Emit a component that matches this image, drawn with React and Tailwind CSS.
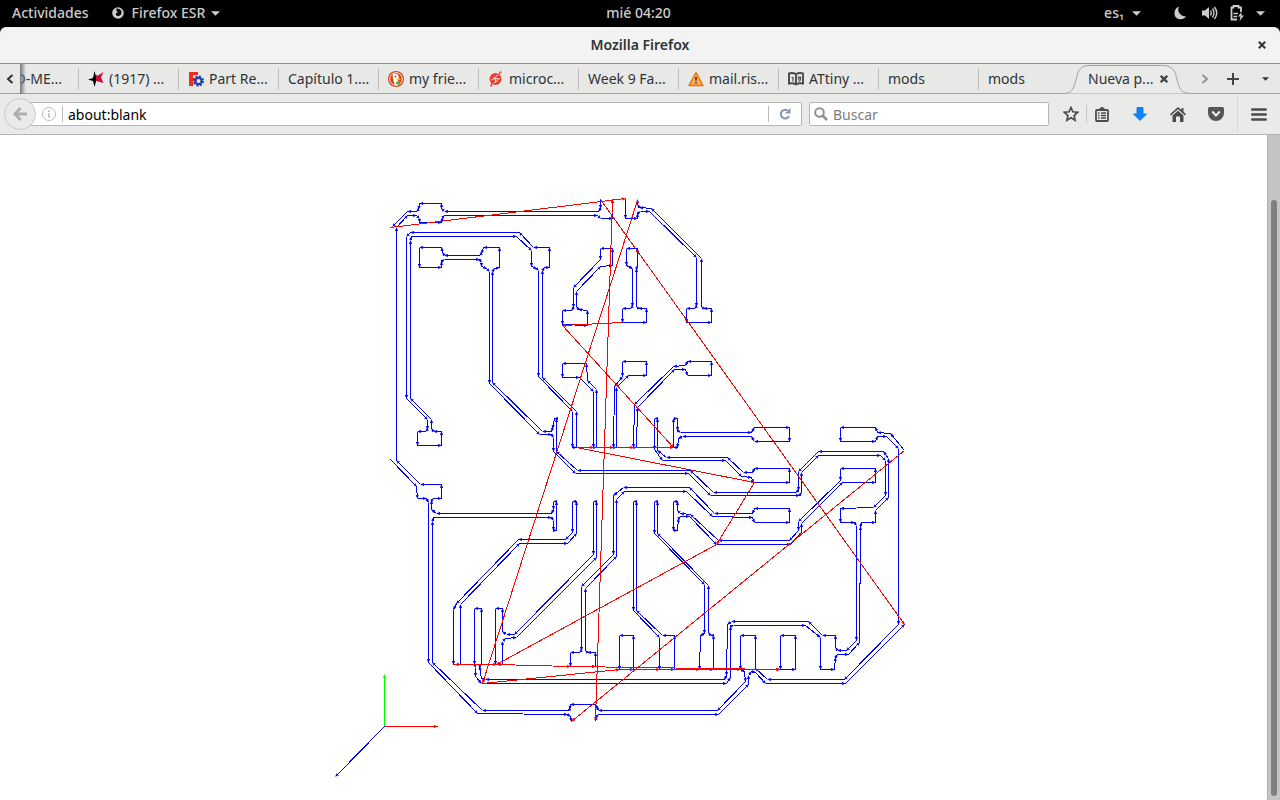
const tabs = [
  { title: '(1917) ...', icon: 'star' },
  { title: 'Part Re...', icon: 'freecad' },
  { title: 'Capítulo 1....' },
  { title: 'my frie...', icon: 'duck' },
  { title: 'microc...', icon: 'micro' },
  { title: 'Week 9 Fa...' },
  { title: 'mail.ris...', icon: 'warning' },
  { title: 'ATtiny ...', icon: 'book' },
  { title: 'mods' },
  { title: 'mods' },
];

// Each toolpath is a list of x,y points; every move ends in an arrow head.
const cuts = [
  '601,199 601,208 599,211 445,211 442,208 442,203 420,203 419,209 417,211 408,211 393,226',
  '397,459 397,227 408,215 417,215 420,218 420,222 442,222 443,217 445,215 598,215 601,218 613,218 613,199',
  '626,198 626,218 638,218 638,213 641,211 650,211 697,257 697,306 695,308 687,308 687,322 712,322 712,308 704,308 702,306 702,258 652,208 640,207 638,204 638,199',
  '550,247 534,247 520,232 411,232 407,236 407,398 428,419 428,429 426,431 418,431 418,445 442,445 442,431 434,431 432,428 432,419 411,398 411,240 412,236 517,236 532,250 532,266 537,268 539,270 539,376 573,411 573,447 577,447 577,411 543,377 543,270 545,267 550,267 550,247',
  '442,247 420,247 420,267 442,267 442,261 445,259 480,259 482,262 482,266 487,268 490,271 490,383 540,434 552,434 554,437 554,451 576,473 689,473 711,495 800,495 802,492 802,472 819,455 881,455 886,460 886,495 874,507 841,508 841,522 855,522 857,525 857,640 847,650 838,650 836,647 836,635 823,635 809,621 732,621 728,624 727,675 725,679 486,679 482,678 480,666 482,664 482,608 475,608 475,664 476,667 476,676 482,683 727,683 731,677 731,626 734,625 806,625 821,637 821,669 835,669 836,657 838,654 849,654 860,642 861,526 862,522 876,522 876,510 889,497 889,458 884,451 819,451 799,471 799,490 796,492 714,492 691,470 578,470 557,451 557,418 555,418 553,428 552,431 543,431 493,382 493,271 495,268 500,267 500,247 484,247 482,253 480,255 445,255 443,252 442,247',
  '613,248 601,248 601,259 574,287 574,307 572,310 563,310 563,324 588,325 588,310 579,309 577,306 577,291 601,266 613,265 613,248',
  '638,248 627,248 627,265 633,268 633,306 631,308 623,308 623,322 647,322 647,308 639,308 637,306 637,268 638,265 638,248',
  '587,363 563,363 563,377 580,377 594,391 594,447 597,447 597,389 588,380 587,363',
  '647,361 623,361 623,376 620,380 615,386 614,447 617,447 617,387 629,375 647,375 647,361',
  '712,361 688,361 686,365 674,366 635,404 634,447 637,447 638,407 675,369 686,369 688,375 712,375 712,361',
  '658,418 655,418 655,449 663,460 726,460 742,476 752,477 754,482 790,482 790,468 755,468 753,472 744,472 728,457 667,457 658,450 658,418',
  '674,447 674,418 678,418 678,430 681,432 752,432 755,427 790,427 790,441 755,441 752,436 683,436 679,438 678,447 674,447',
  '905,450 891,433 878,432 876,427 841,427 841,441 876,441 878,436 887,436 899,448 899,624 845,679 768,679 756,668 756,635 741,635 741,669 745,671 746,681 718,710 599,710 597,706 596,704 571,704 570,709 568,710 483,710 433,662 433,521 434,517 552,517 554,520 554,530 557,530 557,501 554,501 554,509 552,513 437,513 432,509 432,500 434,498 442,498 442,484 421,484 397,460',
  '391,459 417,486 418,498 427,498 429,502 429,662 478,713 568,714 571,716 572,721',
  '596,721 597,716 599,714 719,714 749,684 749,675 752,671 756,672 766,683 846,683 905,624',
  '876,468 841,468 841,480 799,521 799,530 790,540 719,540 691,514 681,513 678,510 678,501 674,501 674,530 678,530 679,518 681,516 690,516 717,544 791,544 802,532 802,523 843,482 876,482 876,468',
  '790,508 755,508 753,513 715,513 690,487 624,487 614,495 614,554 582,586 582,650 580,652 571,652 571,666 596,666 596,652 588,652 586,650 586,588 617,556 617,499 625,491 687,491 713,516 753,517 755,522 790,522 790,508',
  '577,501 573,501 573,532 566,539 519,539 457,603 454,609 454,664 461,664 461,604 520,543 568,543 577,533 577,501',
  '597,501 594,501 594,554 515,634 507,634 503,631 503,608 496,608 496,664 503,664 503,641 506,638 517,637 597,557 597,501',
  '637,501 634,501 634,610 660,637 660,669 675,669 675,635 663,635 637,610 637,501',
  '658,501 655,501 655,533 705,584 705,633 701,635 700,669 714,669 714,635 711,635 709,632 709,585 658,533 658,501',
  '634,635 620,635 620,669 634,669 634,635',
  '796,635 781,635 781,669 796,669 796,635',
];

const jogs = [
  '391,227 626,198',
  '613,199 596,720',
  '638,200 483,683 620,669 660,669 700,669 741,669 781,669',
  '905,450 572,721',
  '601,199 905,624',
  '623,322 563,325 674,447',
  '577,447 594,447 614,447 634,447 674,447',
  '577,447 755,482 717,544 497,664',
  '454,664 497,664 571,666 780,669',
];

function Path({ points, color }) {
  const pts = points.split(' ').map((p) => p.split(',').map(Number));
  return pts.slice(1).map(([x, y], i) => (
    <line
      key={i}
      x1={pts[i][0]}
      y1={pts[i][1]}
      x2={x}
      y2={y}
      stroke={color}
      shapeRendering="crispEdges"
      markerEnd={`url(#head-${color})`}
    />
  ));
}

function Toolpath() {
  return (
    <svg viewBox="0 135 1267 665" className="block h-full w-full" role="img" aria-label="Toolpath">
      <defs>
        {['blue', 'red', 'lime'].map((color) => (
          <marker
            key={color}
            id={`head-${color}`}
            markerUnits="userSpaceOnUse"
            markerWidth="5"
            markerHeight="4"
            refX="3.500"
            refY="2"
            orient="auto"
          >
            <path d="M0 .4 4 2 0 3.6z" fill={color} />
          </marker>
        ))}
      </defs>
      <g transform="translate(-.5 .5)" fill="none" strokeWidth="1">
        {cuts.map((points, i) => <Path key={i} points={points} color="blue" />)}
        {jogs.map((points, i) => <Path key={i} points={points} color="red" />)}
        <Path points="385,726 385,674" color="lime" />
        <Path points="385,726 438,726" color="red" />
        <Path points="385,726 336,776" color="blue" />
      </g>
    </svg>
  );
}

function TabIcon({ name }) {
  if (name === 'star') {
    return (
      <svg viewBox="0 0 16 16" className="h-4 w-4 shrink-0">
        <path d="M8 4 10 4.500 15.500 1 13 6.500 15.500 12 10 10.500 8 10z" fill="#c8103c" />
        <path d="M6.500 0 8 5.500v5L6.500 16 5 10 0 8.500 5 7z" fill="#000" />
      </svg>
    );
  }
  if (name === 'freecad') {
    return (
      <svg viewBox="0 0 16 16" className="h-4 w-4 shrink-0">
        <path d="M1 1h9v3H5v3h4v3H5v5H1z" fill="#f32b1d" />
        <circle cx="10.500" cy="10" r="3.200" fill="none" stroke="#1f45a8" strokeWidth="2.400" />
        <circle cx="10.500" cy="10" r="4.800" fill="none" stroke="#1f45a8" strokeWidth="1.600" strokeDasharray="2 1.770" />
      </svg>
    );
  }
  if (name === 'duck') {
    return (
      <svg viewBox="0 0 16 16" className="h-4 w-4 shrink-0">
        <circle cx="8" cy="8" r="8" fill="#d9400d" />
        <circle cx="8" cy="8" r="6.300" fill="#d9400d" stroke="#fff" strokeWidth="1" />
        <path d="M5 3c3-1 5 0 6 3l-1 3 1 5H7C6 11 4 6 5 3z" fill="#fff" />
        <path d="m8 7 5 1-4 2z" fill="#fc3" />
        <path d="m8 11 4-1v4l-4-1z" fill="#4ca64c" />
        <circle cx="7.500" cy="5.500" r=".8" fill="#234" />
      </svg>
    );
  }
  if (name === 'micro') {
    return (
      <svg viewBox="0 0 16 16" className="h-4 w-4 shrink-0">
        <circle cx="7.500" cy="8" r="6" fill="#e8412f" />
        <path d="m11 3 2-2.500M4 13l-1.500 2.500" stroke="#e8412f" strokeWidth="1.500" />
        <path d="m3.500 9 3-2 3.500-3.500M6.500 7l4 1-2.500 3-1.500-4M8 11l-2 1m5-4 1-1" fill="none" stroke="#fff" strokeWidth=".9" />
      </svg>
    );
  }
  if (name === 'warning') {
    return (
      <svg viewBox="0 0 16 16" className="h-4 w-4 shrink-0">
        <path d="M8 1.500 15 14.500H1z" fill="#fbac5c" stroke="#e8750a" strokeWidth="1.500" strokeLinejoin="round" />
        <path d="M7 6h2l-.4 4H7.400zM7.200 11h1.600v1.600H7.200z" fill="#5a3310" />
      </svg>
    );
  }
  return (
    <svg viewBox="0 0 16 16" className="h-4 w-4 shrink-0" fill="none" stroke="#4a4a4a">
      <path d="M1 2.500c3-1 5-.5 7 .8 2-1.300 4-1.800 7-.8v10c-3-.6-5-.3-7 1-2-1.300-4-1.600-7-1zM8 3v10" strokeWidth="1.900" />
      <path d="M3.500 6.500h1.500v4M10.500 6h2v2h-2zm2 2c0 2-1 2-2 2.500" strokeWidth="1.200" />
    </svg>
  );
}

function Caret({ className }) {
  return (
    <svg viewBox="0 0 10 5" className={className} fill="currentColor">
      <path d="M0 0h10L5 5z" />
    </svg>
  );
}

function TopBar() {
  return (
    <header className="grid h-[27px] shrink-0 grid-cols-3 items-center bg-black pr-[15px] pb-px pl-3 text-sm font-medium text-[#cccccc]">
      <div className="flex items-center">
        <button>Actividades</button>
        <button className="ml-[23px] flex items-center">
          <svg viewBox="0 0 12 12" className="mr-2 h-3 w-3">
            <circle cx="6" cy="6" r="5.800" fill="#ccc" />
            <path d="M4.500 1.500c2.500 0 5 1 5 4 0 2-1.500 3.500-3.500 3.500S3.500 7.500 4 6l2-.5L4.500 4z" fill="#000" />
          </svg>
          Firefox ESR
          <Caret className="ml-[6px] h-[5px] w-[9px]" />
        </button>
      </div>
      <button className="justify-self-center">mié 04:20</button>
      <div className="flex items-center justify-end">
        <button className="flex items-center">
          es₁
          <Caret className="ml-2 h-[5px] w-[9px]" />
        </button>
        <button className="ml-8 flex items-center gap-4" aria-label="Sistema">
          <svg viewBox="0 0 14 14" className="h-[14px] w-[14px]" fill="currentColor">
            <path d="M6 .5C4 4 6 10 13 10.500 10 15 2 14 1.500 8 1.300 4 3 1.500 6 .5z" />
          </svg>
          <svg viewBox="0 0 16 14" className="-ml-px h-[14px] w-4" fill="none" stroke="currentColor">
            <path d="M0 4.500h3L7 1v12L3 9.500H0z" fill="currentColor" stroke="none" />
            <path d="M8.500 4.500q1.500 2.500 0 5M10.500 2.500q3 4.500 0 9M12.500 1q4.500 6 0 12" strokeWidth="1.400" />
          </svg>
          <svg viewBox="0 0 14 16" className="-ml-1 h-4 w-[14px]" fill="none" stroke="currentColor">
            <path d="M7 14.500H1.500v-12h2V1h5v1.500h2.500V7" strokeWidth="1.800" />
            <path d="M3.500 8.500H8M3.500 11.500H7" strokeWidth="1.600" />
            <path d="M11.500 7 8 11.500h2.500L9.500 16l4.500-5.500h-2.500z" fill="currentColor" stroke="none" />
          </svg>
          <Caret className="-ml-1 h-[5px] w-[9px]" />
        </button>
      </div>
    </header>
  );
}

function TabStrip() {
  return (
    <div className="flex h-[31px] shrink-0 border-t border-[#8b8e88] bg-[#e8e8e7] text-sm text-[#2e3436] shadow-[inset_0_-1px_0_#a3a5a0]">
      <button className="flex w-5 shrink-0 items-center justify-center" aria-label="Pestañas anteriores">
        <svg viewBox="0 0 8 10" className="h-[10px] w-2" fill="none" stroke="currentColor" strokeWidth="2">
          <path d="M6.500 1 2 5l4.500 4" />
        </svg>
      </button>
      <div className="relative flex w-[58px] shrink-0 items-center justify-end overflow-hidden pr-4">
        <button className="whitespace-nowrap">D-ME...</button>
        <span className="absolute inset-y-0 left-0 w-[6px] bg-gradient-to-r from-[#777] to-transparent" />
      </div>
      {tabs.map((tab, i) => (
        <button
          key={i}
          className="flex min-w-0 max-w-[100px] flex-1 items-center gap-[5px] overflow-hidden whitespace-nowrap bg-[linear-gradient(#bfc0bd,#bfc0bd)] bg-[length:1px_22px] bg-[position:left_center] bg-no-repeat pl-[10px]"
        >
          {tab.icon && <TabIcon name={tab.icon} />}
          {tab.title}
        </button>
      ))}
      <div className="relative -ml-[14px] flex w-[126px] shrink-0 items-center pl-6">
        <svg viewBox="0 0 126 30" className="absolute inset-0 h-[30px] w-[126px]">
          <path
            d="M0 29.500c7 0 9-4 11-10l2-8C15 4 19 1.500 25 1.500h74c7 0 11 3 13 10l2 8c2 6 4 10 12 10"
            fill="#eaeae9"
            stroke="#a0a29e"
          />
        </svg>
        <button className="relative">Nueva p...</button>
        <button className="relative ml-[7px]" aria-label="Cerrar pestaña">
          <svg viewBox="0 0 8 8" className="h-2 w-2" stroke="#41474a" strokeWidth="2.300">
            <path d="m.8.8 6.400 6.400m0-6.400L.8 7.200" />
          </svg>
        </button>
      </div>
      <div className="ml-auto flex w-[89px] shrink-0 items-center pl-[10px]">
        <button aria-label="Pestañas siguientes">
          <svg viewBox="0 0 8 10" className="h-[10px] w-2" fill="none" stroke="#929592" strokeWidth="2">
            <path d="m1.500 1 4.500 4-4.500 4" />
          </svg>
        </button>
        <button className="ml-[18px]" aria-label="Nueva pestaña">
          <svg viewBox="0 0 12 12" className="h-3 w-3" stroke="#41474a" strokeWidth="2">
            <path d="M6 0v12M0 6h12" />
          </svg>
        </button>
        <button className="ml-[23px]" aria-label="Listar todas las pestañas">
          <Caret className="h-1 w-[7px]" />
        </button>
      </div>
    </div>
  );
}

function NavBar() {
  return (
    <div className="flex h-[41px] shrink-0 items-center border-b border-[#b4b6b2] bg-[#eaeae9] pr-[13px] text-sm">
      <button
        className="relative z-10 ml-1 flex h-8 w-8 shrink-0 items-center justify-center rounded-full border border-[#c9cac7] bg-[#eaeae9]"
        aria-label="Atrás"
      >
        <svg viewBox="0 0 14 14" className="h-[14px] w-[14px]" fill="none" stroke="#aeafac" strokeWidth="3">
          <path d="M7.500 1 2 7l5.500 6M2 7h12" />
        </svg>
      </button>
      <div className="-ml-2 flex h-6 min-w-0 flex-1 items-center rounded-[2px] border border-[#b6b8b3] bg-white pl-[13px]">
        <svg viewBox="0 0 14 14" className="h-[14px] w-[14px] shrink-0" fill="none" stroke="#bcbcbc">
          <circle cx="7" cy="7" r="6.500" />
          <path d="M7 6v5M7 3v2" strokeWidth="1.600" />
        </svg>
        <span className="ml-[6px] h-4 w-px bg-[#b9b9b9]" />
        <input
          type="text"
          defaultValue="about:blank"
          aria-label="Dirección"
          className="h-full min-w-0 flex-1 bg-transparent pl-[5px] text-black outline-none"
        />
        <span className="h-4 w-px bg-[#b9b9b9]" />
        <button className="flex w-8 justify-center" aria-label="Recargar">
          <svg viewBox="0 0 12 12" className="h-3 w-3" fill="none" stroke="#8795a5" strokeWidth="2">
            <path d="M8.500 2.500A4.300 4.300 0 1 0 10 8" />
            <path d="M11.500 0v5.500H6z" fill="#8795a5" stroke="none" />
          </svg>
        </button>
      </div>
      <label className="ml-[7px] flex h-6 w-[240px] shrink-0 items-center rounded-[2px] border border-[#b6b8b3] bg-white pl-1">
        <svg viewBox="0 0 14 14" className="h-[14px] w-[14px] shrink-0" fill="none" stroke="#909090" strokeWidth="2">
          <circle cx="5.500" cy="5.500" r="4.300" />
          <path d="m8.500 8.500 4.500 4.500" strokeWidth="2.500" />
        </svg>
        <input
          type="text"
          placeholder="Buscar"
          aria-label="Buscar"
          className="h-full min-w-0 flex-1 bg-transparent pl-[5px] outline-none placeholder:text-[#7d7d7d]"
        />
      </label>
      <button className="ml-[14px]" aria-label="Marcador">
        <svg viewBox="0 0 16 16" className="h-4 w-4" fill="none" stroke="#4c4c4c" strokeWidth="1.700">
          <path d="m8 1.500 1.900 4.300 4.700.5-3.500 3.200 1 4.700L8 11.800l-4.100 2.400 1-4.700L1.400 6.300l4.700-.5z" />
        </svg>
      </button>
      <span className="ml-[7px] h-[18px] w-px bg-[#c5c5c3]" />
      <button className="ml-2" aria-label="Lista de marcadores">
        <svg viewBox="0 0 14 15" className="h-[15px] w-[14px]" fill="none" stroke="#4c4c4c">
          <rect x="1" y="3" width="12" height="11" rx="1" strokeWidth="1.800" />
          <path d="M4 2.500 7 0l3 2.500z" fill="#4c4c4c" />
          <path d="M3 6h1.500M6 6h5M3 8.500h1.500M6 8.500h5M3 11h1.500M6 11h5" strokeWidth="1.300" />
        </svg>
      </button>
      <button className="ml-6" aria-label="Descargas">
        <svg viewBox="0 0 14 14" className="h-[14px] w-[14px]">
          <path d="M4 .5h6V7h3.500L7 13.500.5 7H4z" fill="#0a84ff" stroke="#0b6fd6" strokeWidth=".8" />
        </svg>
      </button>
      <button className="ml-[23px]" aria-label="Inicio">
        <svg viewBox="0 0 16 15" className="h-[15px] w-4" fill="#4c4c4c">
          <path d="m8 0 3.500 3V1h2v3.800L16 7.300 15 8.500 8 2.300 1 8.500 0 7.300z" />
          <path d="m8 3.800 5.500 4.800V15H10V9.500H6V15H2.500V8.600z" />
        </svg>
      </button>
      <button className="ml-[22px]" aria-label="Pocket">
        <svg viewBox="0 0 16 14" className="h-[14px] w-4">
          <path d="M1.500 0h13Q16 0 16 1.500V6a8 8 0 0 1-16 0V1.500Q0 0 1.500 0z" fill="#565656" />
          <path d="m4.200 4.500 3.800 4 3.800-4" fill="none" stroke="#eee" strokeWidth="2" />
        </svg>
      </button>
      <span className="ml-[13px] h-9 w-px bg-[#d8d8d6]" />
      <button className="ml-[13px]" aria-label="Abrir menú">
        <svg viewBox="0 0 16 13" className="h-[13px] w-4" stroke="#4c4c4c" strokeWidth="2.600" strokeLinecap="round">
          <path d="M1.300 1.500h13.400M1.300 6.500h13.400M1.300 11.500h13.400" />
        </svg>
      </button>
    </div>
  );
}

export default function App() {
  return (
    <div className="flex h-screen flex-col overflow-hidden bg-black font-['Noto_Sans',sans-serif]">
      <TopBar />
      <div className="grid h-9 shrink-0 grid-cols-[1fr_auto_1fr] items-center rounded-t-md bg-[#f3f3f3] px-[14px] text-sm text-[#2e3436]">
        <h1 className="col-start-2 font-semibold">Mozilla Firefox</h1>
        <button className="justify-self-end" aria-label="Cerrar">
          <svg viewBox="0 0 8 8" className="h-2 w-2" stroke="#2e3436" strokeWidth="2">
            <path d="m.8.8 6.400 6.400m0-6.400L.8 7.200" />
          </svg>
        </button>
      </div>
      <TabStrip />
      <NavBar />
      <div className="flex min-h-0 flex-1 bg-white">
        <main className="min-w-0 flex-1">
          <Toolpath />
        </main>
        <div className="flex w-[13px] shrink-0 flex-col border-l border-[#acafad] bg-[#c3c5c4] pt-[65px] pb-1">
          <div className="mx-auto w-[6px] flex-1 rounded-full bg-[#7c8081]" />
        </div>
      </div>
    </div>
  );
}
